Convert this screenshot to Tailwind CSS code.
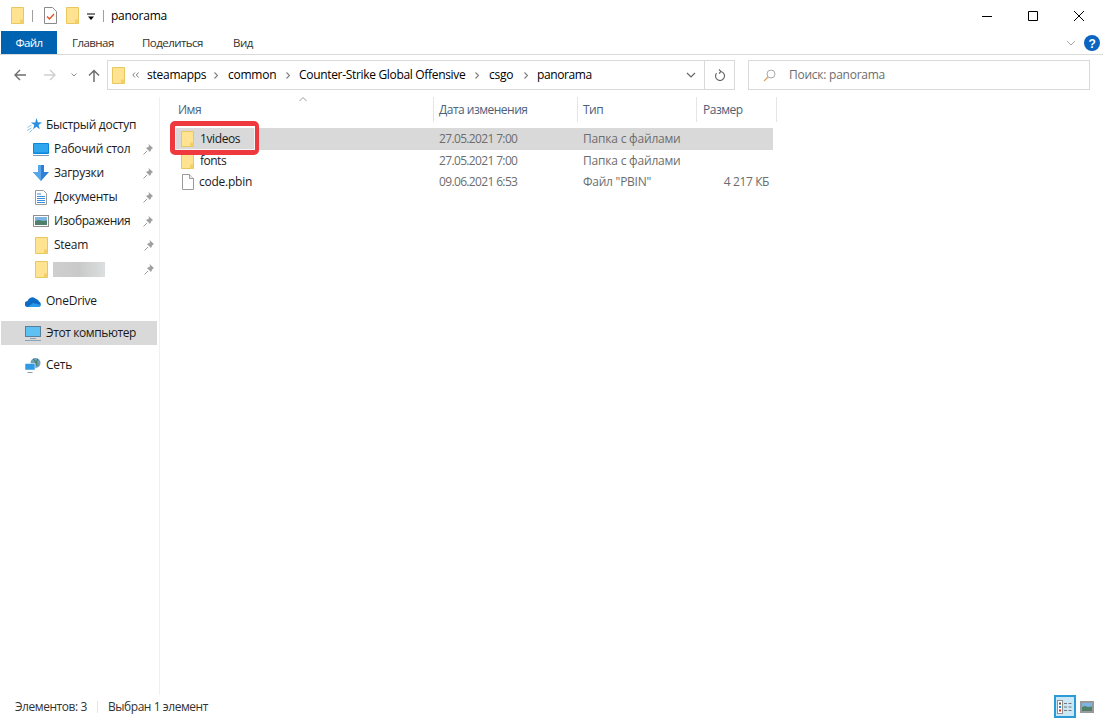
<!DOCTYPE html>
<html lang="ru">
<head>
    <meta charset="UTF-8">
    <title>panorama</title>
    <script src="https://cdn.jsdelivr.net/npm/@tailwindcss/browser@4"></script>
</head>
<body class="bg-white overflow-hidden font-['Open_Sans','Liberation_Sans',sans-serif] text-[12px] tracking-[-0.25px] text-[#1a1a1a]">
<div class="relative w-[1103px] h-[718px] flex flex-col">

    <!-- Title bar -->
    <div class="h-[31px] flex items-center shrink-0">
        <svg class="ml-[11px]" width="13" height="17" viewBox="0 0 13 17"><path d="M.5.5h12v16H.5z" fill="#ffe391" stroke="#e8c75f"/><path d="M9 16.5v-4h3.500v4z" fill="#f2cf68"/></svg>
        <div class="ml-[8px] w-px h-[12px] bg-[#a0a0a0]"></div>
        <svg class="ml-[11px]" width="13" height="17" viewBox="0 0 13 17"><path d="M.5.5h8l4 4v12H.5z" fill="#fff" stroke="#8a8a8a"/><path d="M3 9.500l2.500 2.500L10 7" fill="none" stroke="#e8562a" stroke-width="1.500"/></svg>
        <svg class="ml-[9px]" width="13" height="17" viewBox="0 0 13 17"><path d="M.5.5h12v16H.5z" fill="#ffe391" stroke="#e8c75f"/><path d="M9 16.5v-4h3.500v4z" fill="#f2cf68"/></svg>
        <svg class="ml-[8px] mt-[2px]" width="8" height="8" viewBox="0 0 8 8"><path d="M0 1h8" stroke="#000"/><path d="M1 3.500h6L4 7z" fill="#000"/></svg>
        <div class="ml-[8px] w-px h-[12px] bg-[#a0a0a0]"></div>
        <span class="ml-[7px] text-black">panorama</span>
        <div class="ml-auto flex items-center">
            <svg width="46" height="30" viewBox="0 0 46 30"><path d="M18 15.500h10" stroke="#000"/></svg>
            <svg width="46" height="30" viewBox="0 0 46 30"><path d="M18.500 10.500h9v9h-9z" fill="none" stroke="#000"/></svg>
            <svg class="mr-[1px]" width="46" height="30" viewBox="0 0 46 30"><path d="M18 10l10 10M28 10L18 20" stroke="#000" fill="none"/></svg>
        </div>
    </div>

    <!-- Ribbon tabs -->
    <div class="h-[24px] flex shrink-0 border-b border-[#dadada] relative text-[11.5px] tracking-[-0.55px]">
        <div class="ml-[1px] w-[56px] h-[23px] bg-[#0063b1] text-white flex items-center justify-center">Файл</div>
        <div class="ml-[15px] w-[70px] flex items-center text-[#333]">Главная</div>
        <div class="w-[91px] flex items-center text-[#333]">Поделиться</div>
        <div class="flex items-center text-[#333]">Вид</div>
        <div class="ml-auto flex items-center">
            <svg width="10" height="6" viewBox="0 0 10 6"><path d="M1 1l4 4 4-4" fill="none" stroke="#a8a8a8"/></svg>
            <svg class="ml-[8px] mr-[3px]" width="16" height="16" viewBox="0 0 16 16"><circle cx="8" cy="8" r="8" fill="#0a64c0"/><text x="8" y="12.500" text-anchor="middle" font-size="12" font-weight="700" fill="#fff" font-family="Liberation Sans">?</text></svg>
        </div>
    </div>

    <!-- Navigation bar -->
    <div class="h-[36px] flex items-center shrink-0 pt-[5px] pb-[1px]">
        <svg class="ml-[14px]" width="12" height="12" viewBox="0 0 12 12"><path d="M12 6H1.500M6 1L1 6l5 5" fill="none" stroke="#6e6e6e" stroke-width="1.400"/></svg>
        <svg class="ml-[18px]" width="12" height="12" viewBox="0 0 12 12"><path d="M0 6h10.500M6 1l5 5-5 5" fill="none" stroke="#cfcfcf" stroke-width="1.400"/></svg>
        <svg class="ml-[15px]" width="6" height="4" viewBox="0 0 6 4"><path d="M.5.500L3 3 5.500.5" fill="none" stroke="#8a8a8a"/></svg>
        <svg class="ml-[11px]" width="12" height="13" viewBox="0 0 12 13"><path d="M6 13V1.500M1 6.500l5-5 5 5" fill="none" stroke="#6e6e6e" stroke-width="1.500"/></svg>
        <div class="ml-[7px] w-[628px] h-[30px] border border-[#d9d9d9] flex items-center">
            <svg class="ml-[4px]" width="13" height="17" viewBox="0 0 13 17"><path d="M.5.5h12v16H.5z" fill="#ffe391" stroke="#e8c75f"/><path d="M9 16.5v-4h3.500v4z" fill="#f2cf68"/></svg>
            <svg class="ml-[7px] mr-[8px]" width="7" height="6" viewBox="0 0 7 6"><path d="M3 .5L.8 3 3 5.500M6.500.5L4.300 3l2.200 2.500" fill="none" stroke="#808080"/></svg>
            <span class="w-[67px] text-black">steamapps</span>
            <svg class="mr-[10px]" width="4" height="7" viewBox="0 0 4 7"><path d="M.5.5L3.500 3.500.5 6.500" fill="none" stroke="#808080" stroke-width="1.200"/></svg>
            <span class="w-[58px] text-black">common</span>
            <svg class="mr-[9px]" width="4" height="7" viewBox="0 0 4 7"><path d="M.5.5L3.500 3.500.5 6.500" fill="none" stroke="#808080" stroke-width="1.200"/></svg>
            <span class="w-[176px] text-black whitespace-nowrap tracking-[-0.32px]">Counter-Strike Global Offensive</span>
            <svg class="mr-[10px]" width="4" height="7" viewBox="0 0 4 7"><path d="M.5.5L3.500 3.500.5 6.500" fill="none" stroke="#808080" stroke-width="1.200"/></svg>
            <span class="w-[35px] text-black">csgo</span>
            <svg class="mr-[9px]" width="4" height="7" viewBox="0 0 4 7"><path d="M.5.5L3.500 3.500.5 6.500" fill="none" stroke="#808080" stroke-width="1.200"/></svg>
            <span class="text-black tracking-[-0.4px]">panorama</span>
            <svg class="ml-auto mr-[8px]" width="10" height="6" viewBox="0 0 10 6"><path d="M1 1l4 4 4-4" fill="none" stroke="#666" stroke-width="1.200"/></svg>
            <div class="w-[30px] h-full border-l border-[#d9d9d9] flex items-center justify-center">
                <svg width="12" height="13" viewBox="0 0 12 13"><path d="M6 2.500a4.500 4.500 0 1 1-3.500 1.700M5 .5l2 2-2 2" fill="none" stroke="#666" stroke-width="1.100"/></svg>
            </div>
        </div>
        <div class="ml-[13px] w-[342px] h-[30px] border border-[#d9d9d9] flex items-center">
            <svg class="ml-[14px]" width="13" height="13" viewBox="0 0 13 13"><circle cx="8" cy="5" r="4" fill="none" stroke="#a9a9a9"/><path d="M5 8l-4 4" stroke="#e0a060" stroke-width="1.200"/></svg>
            <span class="ml-[13px] text-[#6d6d6d]">Поиск: panorama</span>
        </div>
    </div>

    <!-- Body -->
    <div class="flex-1 flex min-h-0">
        <!-- Sidebar -->
        <div class="w-[160px] shrink-0 mt-[6px] border-r border-[#f0f0f0] pt-[16px]">
            <div class="h-[24px] flex items-center tracking-[-0.3px]">
                <svg class="ml-[27px]" width="15" height="15" viewBox="0 0 15 15"><path d="M9.500 0l1.300 4.300 4.200.1-3.400 2.600 1.200 4.300-3.300-2.600-3.500 2.600 1.300-4.300-3.400-2.600h4.300z" fill="#2b8fe0"/><path d="M.5 9.500l4-2.500M0 12.500l4.500-2.500M2.500 14.500l3-3" stroke="#8cc4ee"/></svg>
                <span class="ml-[4px]">Быстрый доступ</span>
            </div>
            <div class="h-[24px] flex items-center">
                <svg class="ml-[33px]" width="16" height="13" viewBox="0 0 16 13"><rect width="16" height="11" x="0" y="0" rx="1" fill="#0a86dd"/><rect x="1" y="1" width="14" height="8.500" fill="#2ea7ee"/><path d="M0 12.500h16" stroke="#7a9cb8"/></svg>
                <span class="ml-[5px] w-[89px]">Рабочий стол</span>
                <svg width="10" height="11" viewBox="0 0 10 11"><path d="M5.500 0L10 4 8.500 5l-1.500 3-4-4 3-1.500z" fill="#a0a0a0"/><path d="M4 7L.5 10.500" stroke="#a0a0a0"/></svg>
            </div>
            <div class="h-[24px] flex items-center">
                <svg class="ml-[33px]" width="16" height="16" viewBox="0 0 16 16"><path d="M5 0h6v7h5l-8 9-8-9h5z" fill="#2f7fd6"/><path d="M5 0h3v16L0 7h5z" fill="#58a6ea"/></svg>
                <span class="ml-[5px] w-[89px]">Загрузки</span>
                <svg width="10" height="11" viewBox="0 0 10 11"><path d="M5.500 0L10 4 8.500 5l-1.500 3-4-4 3-1.500z" fill="#a0a0a0"/><path d="M4 7L.5 10.500" stroke="#a0a0a0"/></svg>
            </div>
            <div class="h-[24px] flex items-center">
                <svg class="ml-[35px]" width="12" height="15" viewBox="0 0 12 15"><path d="M.5.5h8l3 3v11H.5z" fill="#fff" stroke="#9a9a9a"/><path d="M2 4h4M2 6.500h8M2 8.500h8M2 10.500h8M2 12.500h8" stroke="#3b8edb"/></svg>
                <span class="ml-[7px] w-[89px]">Документы</span>
                <svg width="10" height="11" viewBox="0 0 10 11"><path d="M5.500 0L10 4 8.500 5l-1.500 3-4-4 3-1.500z" fill="#a0a0a0"/><path d="M4 7L.5 10.500" stroke="#a0a0a0"/></svg>
            </div>
            <div class="h-[24px] flex items-center">
                <svg class="ml-[33px]" width="16" height="12" viewBox="0 0 16 12"><rect x=".5" y=".5" width="15" height="11" fill="#fff" stroke="#8f8f8f"/><rect x="2" y="2" width="12" height="4" fill="#7cb4e2"/><path d="M2 6l4-1 4 1 4-.5V10H2z" fill="#4f8069"/></svg>
                <span class="ml-[5px] w-[89px] tracking-[-0.4px]">Изображения</span>
                <svg width="10" height="11" viewBox="0 0 10 11"><path d="M5.500 0L10 4 8.500 5l-1.500 3-4-4 3-1.500z" fill="#a0a0a0"/><path d="M4 7L.5 10.500" stroke="#a0a0a0"/></svg>
            </div>
            <div class="h-[24px] flex items-center">
                <svg class="ml-[35px]" width="13" height="17" viewBox="0 0 13 17"><path d="M.5.5h12v16H.5z" fill="#ffe391" stroke="#e8c75f"/><path d="M9 16.5v-4h3.500v4z" fill="#f2cf68"/></svg>
                <span class="ml-[6px] w-[90px]">Steam</span>
                <svg width="10" height="11" viewBox="0 0 10 11"><path d="M5.500 0L10 4 8.500 5l-1.500 3-4-4 3-1.500z" fill="#a0a0a0"/><path d="M4 7L.5 10.500" stroke="#a0a0a0"/></svg>
            </div>
            <div class="h-[24px] flex items-center">
                <svg class="ml-[35px]" width="13" height="17" viewBox="0 0 13 17"><path d="M.5.5h12v16H.5z" fill="#ffe391" stroke="#e8c75f"/><path d="M9 16.5v-4h3.500v4z" fill="#f2cf68"/></svg>
                <div class="ml-[5px] w-[52px] h-[15px] bg-gradient-to-r from-[#cfcfcf] via-[#c9c9c9] to-[#dcdfdf]"></div>
                <svg class="ml-[39px]" width="10" height="11" viewBox="0 0 10 11"><path d="M5.500 0L10 4 8.500 5l-1.500 3-4-4 3-1.500z" fill="#a0a0a0"/><path d="M4 7L.5 10.500" stroke="#a0a0a0"/></svg>
            </div>
            <div class="h-[24px] mt-[8px] flex items-center">
                <svg class="ml-[25px]" width="16" height="11" viewBox="0 0 16 11"><path d="M3 11a3 3 0 0 1-.5-6A5 5 0 0 1 11 3a3.500 3.500 0 0 1 3 2.500A3 3 0 0 1 14 11z" fill="#0f6cc4"/><path d="M3 11l5-4 8 2-2 2z" fill="#2a9ae8"/></svg>
                <span class="ml-[5px]">OneDrive</span>
            </div>
            <div class="h-[24px] mt-[8px] flex items-center bg-[#d9d9d9] ml-[1px] w-[156px] tracking-[-0.4px]">
                <svg class="ml-[24px]" width="16" height="15" viewBox="0 0 16 15"><rect x=".5" y=".5" width="15" height="10" fill="#5fc0f2" stroke="#5a7f98"/><path d="M5 12.500h6M0 14.500h16" stroke="#8aa2b4"/></svg>
                <span class="ml-[5px]">Этот компьютер</span>
            </div>
            <div class="h-[24px] mt-[8px] flex items-center">
                <svg class="ml-[25px]" width="16" height="15" viewBox="0 0 16 15"><circle cx="10.500" cy="5" r="5" fill="#6f9fc0"/><path d="M8 1c2 1 3 3 2 5M13 1c-1 1-2 3-1 7" stroke="#3f7a3f" fill="none"/><rect x="0" y="5.500" width="10" height="6.500" fill="#2f9be6" stroke="#fff" stroke-width=".5"/><path d="M2.500 14.500h5" stroke="#8a9aa8"/></svg>
                <span class="ml-[5px]">Сеть</span>
            </div>
        </div>

        <!-- File list -->
        <div class="flex-1 min-w-0 relative">
            <div class="h-[37px] flex items-start pt-[6px] text-[#4c607a] tracking-[-0.5px]">
                <div class="w-[274px] h-[25px] flex items-center border-r border-[#e5e5e5] pl-[18px] relative">Имя
                    <svg class="absolute left-[139px] top-0" width="8" height="5" viewBox="0 0 8 5"><path d="M.5 4L4 .5 7.500 4" fill="none" stroke="#9a9a9a"/></svg>
                </div>
                <div class="w-[144px] h-[25px] flex items-center border-r border-[#e5e5e5] pl-[5px]">Дата изменения</div>
                <div class="w-[119px] h-[25px] flex items-center border-r border-[#e5e5e5] pl-[5px]">Тип</div>
                <div class="w-[80px] h-[25px] flex items-center border-r border-[#e5e5e5] pl-[6px]">Размер</div>
            </div>

            <div class="ml-[12px] w-[601px] text-[#6d6d6d]">
                <div class="h-[22px] flex items-center bg-[#d9d9d9]">
                    <div class="w-[267px] flex items-center">
                        <svg class="ml-[9px]" width="13" height="16" viewBox="0 0 13 16"><path d="M.5.5h12v15H.5z" fill="#ffe391" stroke="#e8c75f"/><path d="M9 15.500v-4h3.500v4z" fill="#f2cf68"/></svg>
                        <span class="ml-[6px] text-[#1a1a1a] tracking-[-0.4px]">1videos</span>
                    </div>
                    <span class="w-[144px] tracking-[-0.65px]">27.05.2021 7:00</span>
                    <span class="w-[115px] tracking-[-0.2px]">Папка с файлами</span>
                </div>
                <div class="h-[21px] flex items-center">
                    <div class="w-[267px] flex items-center">
                        <svg class="ml-[9px]" width="13" height="16" viewBox="0 0 13 16"><path d="M.5.5h12v15H.5z" fill="#ffe391" stroke="#e8c75f"/><path d="M9 15.500v-4h3.500v4z" fill="#f2cf68"/></svg>
                        <span class="ml-[6px] text-[#1a1a1a] tracking-[-0.5px]">fonts</span>
                    </div>
                    <span class="w-[144px] tracking-[-0.65px]">27.05.2021 7:00</span>
                    <span class="w-[115px] tracking-[-0.2px]">Папка с файлами</span>
                </div>
                <div class="h-[21px] flex items-center">
                    <div class="w-[267px] flex items-center">
                        <svg class="ml-[10px]" width="12" height="16" viewBox="0 0 12 16"><path d="M.5.5h7l4 4v11H.5z" fill="#fff" stroke="#9a9a9a"/><path d="M7.500.5v4h4" fill="#eee" stroke="#9a9a9a"/></svg>
                        <span class="ml-[5px] text-[#1a1a1a]">code.pbin</span>
                    </div>
                    <span class="w-[144px] tracking-[-0.65px]">09.06.2021 6:53</span>
                    <span class="w-[115px]">Файл "PBIN"</span>
                    <span class="w-[71px] text-right tracking-[-0.4px]">4 217 КБ</span>
                </div>
            </div>

            <!-- Red highlight drawn over the selected row -->
            <div class="absolute left-[10px] top-[30px] w-[89px] h-[34px] border-y-[5px] border-l-[5px] border-r-[4px] border-[#ee3a3f] rounded-[5px] shadow-[inset_0_0_0_1px_rgba(255,255,255,0.7)]"></div>
        </div>
    </div>

    <!-- Status bar -->
    <div class="h-[23px] flex items-center shrink-0 text-[#333] tracking-[-0.45px] relative">
        <span class="ml-[15px] w-[82px]">Элементов: 3</span>
        <div class="w-px h-[12px] bg-[#e5e5e5]"></div>
        <span class="ml-[10px]">Выбран 1 элемент</span>
        <div class="ml-auto mr-[4px] w-[22px] h-[23px] border-2 border-[#2b9bd6] bg-[#cce8f7] flex items-center justify-center">
            <svg width="16" height="14" viewBox="0 0 16 14"><rect x=".5" y=".5" width="5" height="13" fill="#fff" stroke="#8f8f8f"/><rect x="2" y="2.500" width="2" height="2" fill="#555"/><rect x="2" y="6" width="2" height="2" fill="#2f7fd6"/><rect x="2" y="9.500" width="2" height="2" fill="#d9342b"/><path d="M7 3.500h3M11.500 3.500h3M7 7h3M11.500 7h3M7 10.500h3M11.500 10.500h3" stroke="#777"/></svg>
        </div>
        <svg class="mr-[9px]" width="14" height="12" viewBox="0 0 14 12"><rect x="1" y="1" width="12" height="10" fill="#fff" stroke="#999" stroke-width="2"/><rect x="2" y="2" width="10" height="4" fill="#7cb4e2"/><path d="M2 6l3-1 3 1 4-.5V10H2z" fill="#4f8069"/></svg>
    </div>
</div>
</body>
</html>
